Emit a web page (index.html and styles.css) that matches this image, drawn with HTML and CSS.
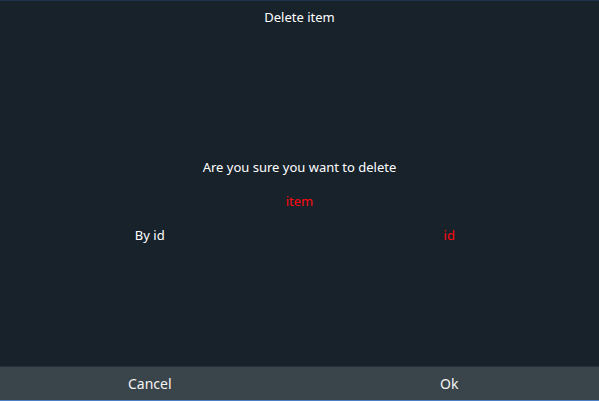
FILE: index.html
```html
<!DOCTYPE html>
<html lang="en">
<head>
<meta charset="utf-8">
<title>Delete item</title>
<link rel="stylesheet" href="styles.css">
</head>
<body>
<form class="dialog">
  <h1 class="title">Delete item</h1>
  <main class="content">
    <p class="line">Are you sure you want to delete</p>
    <p class="line value">item</p>
    <div class="pair">
      <span class="line">By id</span>
      <span class="line value">id</span>
    </div>
  </main>
  <footer class="actions">
    <button class="action" type="button">Cancel</button>
    <button class="action" type="button">Ok</button>
  </footer>
</form>
</body>
</html>
```
FILE: styles.css
```css
* {
  box-sizing: border-box;
}

body {
  margin: 0;
  background: #18222b;
  color: #ffffff;
  font-family: "Noto Sans", "Open Sans", sans-serif;
  font-size: 13px;
}

.dialog {
  display: flex;
  flex-direction: column;
  min-height: 100vh;
  border-top: 1px solid #20334d;
  border-bottom: 1px solid #4d7fc4;
}

.title {
  margin: 0;
  font-size: 13px;
  font-weight: 400;
  line-height: 33px;
  text-align: center;
}

.content {
  flex: 1;
  display: flex;
  flex-direction: column;
  justify-content: center;
  padding-top: 2px;
  text-align: center;
}

.line {
  margin: 0;
  line-height: 34px;
}

.value {
  color: #ff0a0e;
}

.pair {
  display: grid;
  grid-template-columns: 1fr 1fr;
}

.actions {
  display: grid;
  grid-template-columns: 1fr 1fr;
  border-top: 1px solid #27313a;
}

.action {
  height: 33px;
  padding: 0;
  border: 0;
  background: #3a444b;
  color: #f4f4f4;
  font-family: inherit;
  font-size: 14px;
}
```
